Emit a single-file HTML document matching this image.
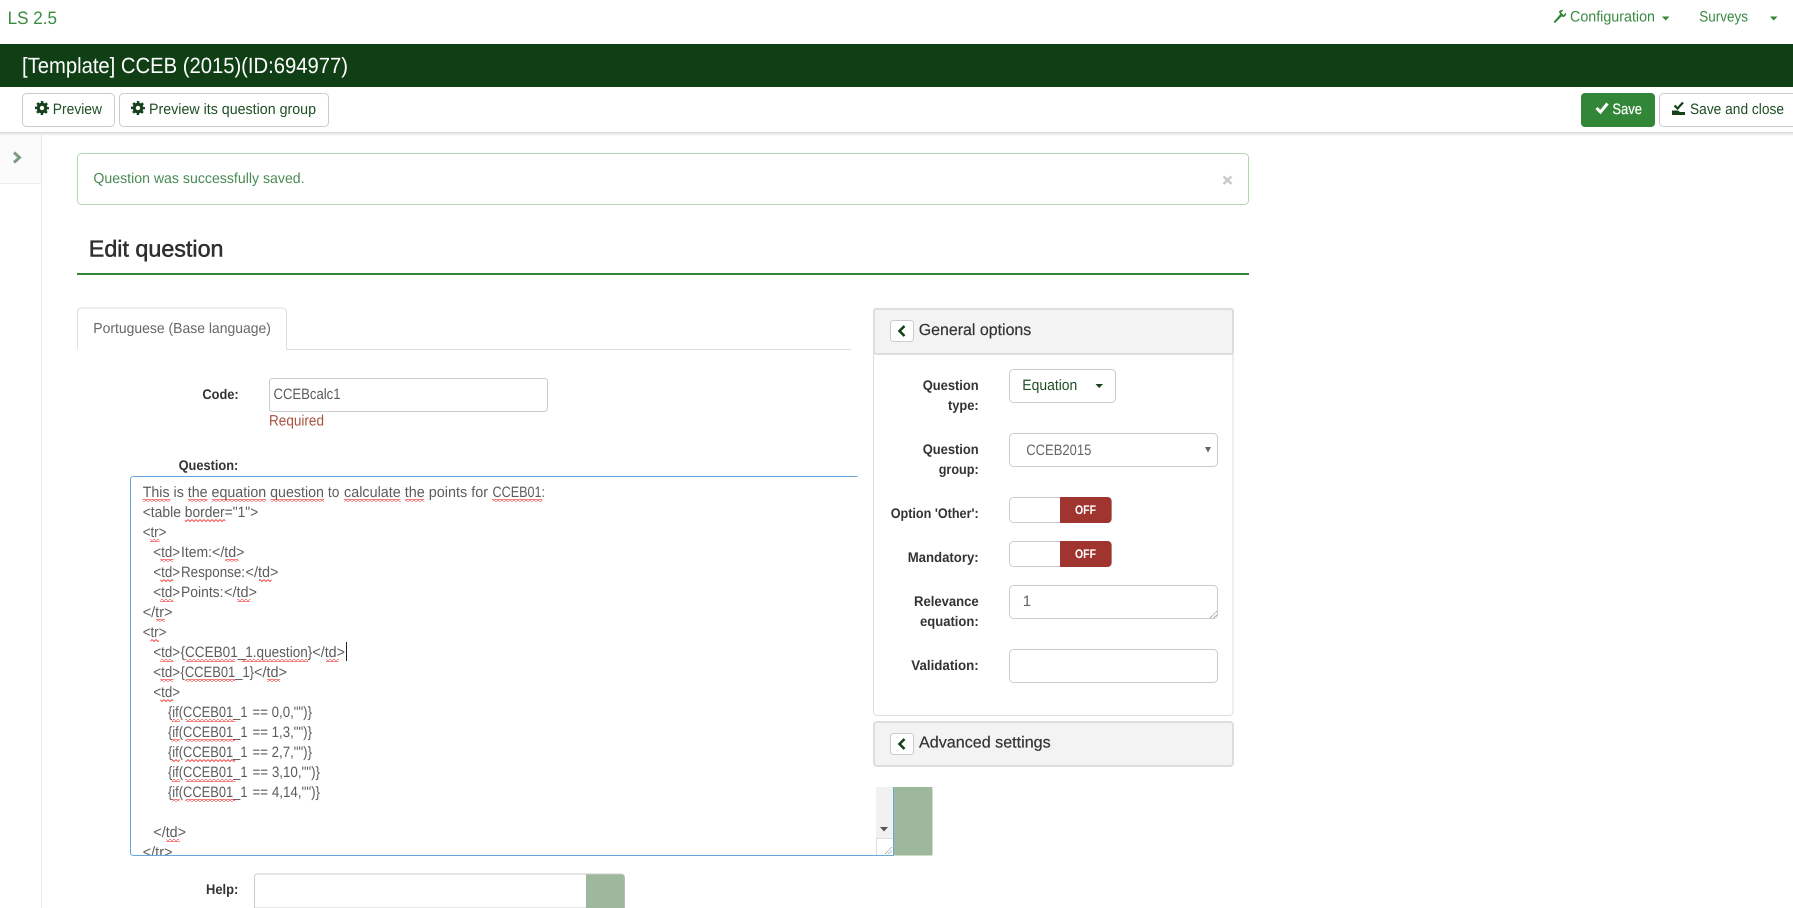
<!DOCTYPE html>
<html>
<head>
<meta charset="utf-8">
<title>Edit question</title>
<style>
html,body{margin:0;padding:0;background:#fff;width:1793px;height:908px;overflow:hidden}
svg{display:block}
text{font-family:"Liberation Sans",sans-serif;white-space:pre}
.g{fill:#3a8a42}
.bt{fill:#1f4f25;font-size:15px}
.l{fill:#333;font-size:14px;font-weight:bold}
.e{fill:#5c5c5c;font-size:15px}
.h{fill:#333;font-size:16px;stroke:#333;stroke-width:.2}
.w{fill:url(#wave)}
</style>
</head>
<body>
<svg width="1793" height="908" viewBox="0 0 1793 908" xmlns="http://www.w3.org/2000/svg" text-rendering="geometricPrecision">
<defs>
<pattern id="wave" width="4" height="3" patternUnits="userSpaceOnUse"><path d="M0 .5L2 2.5L4 .5" fill="none" stroke="#e22" stroke-width=".8"/></pattern>
<linearGradient id="sh" x1="0" y1="0" x2="0" y2="1"><stop offset="0" stop-color="#d8d8d8"/><stop offset="1" stop-color="#fff"/></linearGradient>
<g id="gear"><circle r="3.8" fill="none" stroke="#14401a" stroke-width="3.2"/><circle r="6" fill="none" stroke="#14401a" stroke-width="2" stroke-dasharray="2.4 2.31" stroke-dashoffset="1.2"/></g>
<g id="back"><rect x=".5" y=".5" width="23" height="21" rx="3" fill="#fff" stroke="#ccc"/><path d="M14.500 6L9.500 11L14.500 16" fill="none" stroke="#14401a" stroke-width="2.600"/></g>
<g id="grip"><path d="M0 7L7 0M3.500 7L7 3.500" stroke="#777" stroke-width=".8" stroke-dasharray="1 .7" fill="none"/></g>
</defs>

<!-- top nav -->
<text x="7.600" y="24" class="g" font-size="18" textLength="49.400" lengthAdjust="spacingAndGlyphs">LS 2.5</text>
<path d="M1553.500 22L1560 14.500L1559 11.500C1560 10 1562 9.500 1563.500 10L1561 12.500L1563.500 15L1566 12.500C1566.500 14.500 1565.500 16.500 1563.500 17L1561.500 16.500L1555 23Z" fill="#328637"/>
<text x="1570" y="21.500" class="g" font-size="15" textLength="85" lengthAdjust="spacingAndGlyphs">Configuration</text>
<path d="M1662 16.500H1669.500L1665.700 20.500Z" fill="#328637"/>
<text x="1699.300" y="21.500" class="g" font-size="15" textLength="48.700" lengthAdjust="spacingAndGlyphs">Surveys</text>
<path d="M1770 16.500H1777.500L1773.700 20.500Z" fill="#328637"/>

<!-- title bar -->
<rect x="0" y="44" width="1793" height="43" fill="#103f15"/>
<text x="22" y="73" fill="#fff" font-size="22" textLength="326" lengthAdjust="spacingAndGlyphs">[Template] CCEB (2015)(ID:694977)</text>

<!-- toolbar -->
<rect x="0" y="132" width="1793" height="4" fill="url(#sh)"/>
<rect x="22.500" y="93.500" width="92" height="33" rx="4" fill="#fff" stroke="#ccc"/>
<use href="#gear" x="42" y="108"/>
<text x="52.800" y="114" class="bt" textLength="49.200" lengthAdjust="spacingAndGlyphs">Preview</text>
<rect x="119.500" y="93.500" width="209" height="33" rx="4" fill="#fff" stroke="#ccc"/>
<use href="#gear" x="138" y="108"/>
<text x="149" y="114" class="bt" textLength="167" lengthAdjust="spacingAndGlyphs">Preview its question group</text>
<rect x="1581" y="93" width="74" height="34" rx="4" fill="#328637"/>
<path d="M1596.500 108L1600.500 112L1607.500 103.500" fill="none" stroke="#fff" stroke-width="3"/>
<text x="1612.400" y="114" fill="#fff" font-size="15" textLength="29.600" lengthAdjust="spacingAndGlyphs" stroke="#fff" stroke-width=".2">Save</text>
<rect x="1659.500" y="93.500" width="140" height="33" rx="4" fill="#fff" stroke="#ccc"/>
<path d="M1674.500 105.500L1677.500 108.500L1683 102.500" fill="none" stroke="#14401a" stroke-width="2.200"/>
<path d="M1672 110.500H1678L1680 112H1685V115H1672Z" fill="#14401a"/>
<text x="1690" y="114" class="bt" textLength="94" lengthAdjust="spacingAndGlyphs">Save and close</text>

<!-- sidebar -->
<rect x="0" y="136" width="41" height="47" fill="#fbfbfb"/>
<rect x="0" y="183" width="41" height="1" fill="#eee"/>
<rect x="41" y="132" width="1" height="776" fill="#e8e8e8"/>
<path d="M14 152.500L19.500 157.500L14 162.500" fill="none" stroke="#7f9a82" stroke-width="3"/>

<!-- alert -->
<rect x="77.500" y="153.500" width="1171" height="51" rx="4" fill="#fff" stroke="#b0d8b0"/>
<text x="93.400" y="183" fill="#4a8a54" font-size="14.500" textLength="211.200" lengthAdjust="spacingAndGlyphs">Question was successfully saved.</text>
<path d="M1223.500 176.500L1231.500 184M1231.500 176.500L1223.500 184" stroke="#c8c8c8" stroke-width="2.400" fill="none"/>

<!-- heading -->
<text x="88.800" y="256.500" fill="#2e2e2e" font-size="23" textLength="134.700" lengthAdjust="spacingAndGlyphs" stroke="#2e2e2e" stroke-width=".5">Edit question</text>
<rect x="77" y="273" width="1172" height="2" fill="#328637"/>

<!-- tabs -->
<path d="M77.500 349V312a4 4 0 0 1 4-4H282.500a4 4 0 0 1 4 4V349.500H851" fill="none" stroke="#ddd"/>
<text x="93.300" y="333" fill="#666" font-size="14.500" textLength="177.600" lengthAdjust="spacingAndGlyphs">Portuguese (Base language)</text>

<!-- code -->
<text x="202.400" y="399" class="l" textLength="36.300" lengthAdjust="spacingAndGlyphs">Code:</text>
<rect x="269.500" y="378.500" width="278" height="33" rx="3" fill="#fff" stroke="#ccc"/>
<text x="273.500" y="399" class="e" textLength="67" lengthAdjust="spacingAndGlyphs">CCEBcalc1</text>
<text x="269" y="425.500" fill="#a8503c" font-size="15" textLength="55" lengthAdjust="spacingAndGlyphs">Required</text>

<!-- question -->
<text x="178.600" y="470" class="l" textLength="59.700" lengthAdjust="spacingAndGlyphs">Question:</text>

<text x="142.700" y="497" class="e" textLength="181.300" lengthAdjust="spacingAndGlyphs">This is the equation question</text>
<text x="327.900" y="497" class="e" textLength="11.500" lengthAdjust="spacingAndGlyphs">to</text>
<text x="344" y="497" class="e" textLength="144" lengthAdjust="spacingAndGlyphs">calculate the points for</text>
<text x="492.500" y="497" class="e" textLength="52.500" lengthAdjust="spacingAndGlyphs">CCEB01:</text>

<text x="142.700" y="517" class="e" textLength="38.300" lengthAdjust="spacingAndGlyphs">&lt;table</text>
<text x="184.800" y="517" class="e" textLength="73.400" lengthAdjust="spacingAndGlyphs">border=&quot;1&quot;&gt;</text>

<text x="142.700" y="537" class="e" textLength="23.700" lengthAdjust="spacingAndGlyphs">&lt;tr&gt;</text>

<text x="153.400" y="557" class="e" textLength="26.600" lengthAdjust="spacingAndGlyphs">&lt;td&gt;</text>
<text x="181" y="557" class="e" textLength="31" lengthAdjust="spacingAndGlyphs">Item:</text>
<text x="212" y="557" class="e" textLength="32.500" lengthAdjust="spacingAndGlyphs">&lt;/td&gt;</text>

<text x="153.400" y="577" class="e" textLength="26.600" lengthAdjust="spacingAndGlyphs">&lt;td&gt;</text>
<text x="181" y="577" class="e" textLength="64" lengthAdjust="spacingAndGlyphs">Response:</text>
<text x="245.500" y="577" class="e" textLength="33" lengthAdjust="spacingAndGlyphs">&lt;/td&gt;</text>

<text x="153.400" y="597" class="e" textLength="26.600" lengthAdjust="spacingAndGlyphs">&lt;td&gt;</text>
<text x="181" y="597" class="e" textLength="42.500" lengthAdjust="spacingAndGlyphs">Points:</text>
<text x="224" y="597" class="e" textLength="33" lengthAdjust="spacingAndGlyphs">&lt;/td&gt;</text>

<text x="142.700" y="617" class="e" textLength="29.800" lengthAdjust="spacingAndGlyphs">&lt;/tr&gt;</text>
<text x="142.700" y="637" class="e" textLength="23.700" lengthAdjust="spacingAndGlyphs">&lt;tr&gt;</text>

<text x="153.400" y="657" class="e" textLength="26.600" lengthAdjust="spacingAndGlyphs">&lt;td&gt;</text>
<text x="180.500" y="657" class="e" textLength="131.800" lengthAdjust="spacingAndGlyphs">{CCEB01_1.question}</text>
<text x="312.400" y="657" class="e" textLength="32.600" lengthAdjust="spacingAndGlyphs">&lt;/td&gt;</text>
<rect x="346" y="642" width="1" height="19" fill="#222"/>

<text x="153.400" y="677" class="e" textLength="26.600" lengthAdjust="spacingAndGlyphs">&lt;td&gt;</text>
<text x="180.500" y="677" class="e" textLength="73.500" lengthAdjust="spacingAndGlyphs">{CCEB01_1}</text>
<text x="254" y="677" class="e" textLength="33" lengthAdjust="spacingAndGlyphs">&lt;/td&gt;</text>

<text x="153.400" y="697" class="e" textLength="26.600" lengthAdjust="spacingAndGlyphs">&lt;td&gt;</text>

<text x="168" y="717" class="e" textLength="79.500" lengthAdjust="spacingAndGlyphs">{if(CCEB01_1</text>
<text x="252.500" y="717" class="e" textLength="59.500" lengthAdjust="spacingAndGlyphs">== 0,0,&quot;&quot;)}</text>
<text x="168" y="737" class="e" textLength="79.500" lengthAdjust="spacingAndGlyphs">{if(CCEB01_1</text>
<text x="252.500" y="737" class="e" textLength="59.500" lengthAdjust="spacingAndGlyphs">== 1,3,&quot;&quot;)}</text>
<text x="168" y="757" class="e" textLength="79.500" lengthAdjust="spacingAndGlyphs">{if(CCEB01_1</text>
<text x="252.500" y="757" class="e" textLength="59.500" lengthAdjust="spacingAndGlyphs">== 2,7,&quot;&quot;)}</text>
<text x="168" y="777" class="e" textLength="79.500" lengthAdjust="spacingAndGlyphs">{if(CCEB01_1</text>
<text x="252.500" y="777" class="e" textLength="67.500" lengthAdjust="spacingAndGlyphs">== 3,10,&quot;&quot;)}</text>
<text x="168" y="797" class="e" textLength="79.500" lengthAdjust="spacingAndGlyphs">{if(CCEB01_1</text>
<text x="252.500" y="797" class="e" textLength="67.500" lengthAdjust="spacingAndGlyphs">== 4,14,&quot;&quot;)}</text>

<text x="153.400" y="837" class="e" textLength="32.600" lengthAdjust="spacingAndGlyphs">&lt;/td&gt;</text>
<text x="142.700" y="857" class="e" textLength="29.800" lengthAdjust="spacingAndGlyphs">&lt;/tr&gt;</text>

<!-- spellcheck squiggles -->
<g class="w">
<rect x="142.700" y="499" width="27.500" height="3"/><rect x="188.200" y="499" width="19.100" height="3"/><rect x="211.500" y="499" width="54.400" height="3"/><rect x="270.500" y="499" width="53.500" height="3"/><rect x="344" y="499" width="56.600" height="3"/><rect x="405.200" y="499" width="19.100" height="3"/><rect x="492.500" y="499" width="49.700" height="3"/>
<rect x="184.800" y="519" width="40.500" height="3"/>
<rect x="150" y="539" width="9.500" height="3"/>
<rect x="160.300" y="559" width="13" height="3"/><rect x="225.300" y="559" width="13" height="3"/>
<rect x="160.300" y="579" width="13" height="3"/><rect x="259" y="579" width="12.600" height="3"/>
<rect x="160.300" y="599" width="13" height="3"/><rect x="237.200" y="599" width="13" height="3"/>
<rect x="156.400" y="619" width="8.500" height="3"/>
<rect x="150.300" y="639" width="8.500" height="3"/>
<rect x="160.300" y="659" width="13" height="3"/><rect x="185.500" y="659" width="49.800" height="3"/><rect x="241.400" y="659" width="66.600" height="3"/><rect x="326" y="659" width="12.600" height="3"/>
<rect x="160.300" y="679" width="13" height="3"/><rect x="185.500" y="679" width="49.800" height="3"/><rect x="267" y="679" width="13" height="3"/>
<rect x="160.300" y="699" width="13" height="3"/>
<rect x="172" y="719" width="7.800" height="3"/><rect x="185.500" y="719" width="49.800" height="3"/>
<rect x="172" y="739" width="7.800" height="3"/><rect x="185.500" y="739" width="49.800" height="3"/>
<rect x="172" y="759" width="7.800" height="3"/><rect x="185.500" y="759" width="49.800" height="3"/>
<rect x="172" y="779" width="7.800" height="3"/><rect x="185.500" y="779" width="49.800" height="3"/>
<rect x="172" y="799" width="7.800" height="3"/><rect x="185.500" y="799" width="49.800" height="3"/>
<rect x="166.400" y="839" width="13" height="3"/>
</g>

<!-- editor frame -->
<rect x="131" y="856" width="780" height="12" fill="#fff"/>
<rect x="893.500" y="787" width="39" height="68.500" rx="1" fill="#9db89c"/>
<rect x="876" y="787" width="17" height="51" fill="#f1f1f1"/>
<path d="M880 827H888L884 831.500Z" fill="#555"/>
<rect x="876.500" y="838.500" width="17" height="17" fill="#fff" stroke="#ddd"/>
<use href="#grip" x="885" y="847"/>
<path d="M857.500 476.500H134a3 3 0 0 0-3.500 3.500V852a3 3 0 0 0 3.500 3.500H893.500V787" fill="none" stroke="#69a7da"/>

<!-- help -->
<text x="206" y="894" class="l" textLength="32.300" lengthAdjust="spacingAndGlyphs">Help:</text>
<path d="M254.500 908V877a3 3 0 0 1 3-3H621.500a3 3 0 0 1 3 3V908Z" fill="#fff" stroke="#ccc"/>
<path d="M586 874.500H621.500a3 3 0 0 1 3 3V908H586Z" fill="#9db89c"/>

<!-- general options panel -->
<rect x="873.500" y="308.500" width="359.500" height="407" rx="4" fill="#fff" stroke="#ddd"/>
<rect x="874" y="309" width="359" height="45" rx="2" fill="#f3f3f3" stroke="#ddd" stroke-width="2"/>
<use href="#back" x="890" y="320"/>
<text x="918.700" y="335" class="h" textLength="112.600" lengthAdjust="spacingAndGlyphs">General options</text>

<g class="l">
<text x="922.700" y="390" textLength="56" lengthAdjust="spacingAndGlyphs">Question</text>
<text x="948" y="410" textLength="30.700" lengthAdjust="spacingAndGlyphs">type:</text>
<text x="922.700" y="454" textLength="56" lengthAdjust="spacingAndGlyphs">Question</text>
<text x="938.700" y="474" textLength="40" lengthAdjust="spacingAndGlyphs">group:</text>
<text x="890.700" y="518" textLength="88" lengthAdjust="spacingAndGlyphs">Option 'Other':</text>
<text x="907.700" y="562" textLength="71" lengthAdjust="spacingAndGlyphs">Mandatory:</text>
<text x="914" y="606" textLength="64.700" lengthAdjust="spacingAndGlyphs">Relevance</text>
<text x="920" y="626" textLength="58.700" lengthAdjust="spacingAndGlyphs">equation:</text>
<text x="911.300" y="670" textLength="67.400" lengthAdjust="spacingAndGlyphs">Validation:</text>
</g>

<rect x="1009.500" y="369.500" width="106" height="33" rx="4" fill="#fff" stroke="#ccc"/>
<text x="1022.300" y="390" fill="#1f4f25" font-size="15" textLength="55" lengthAdjust="spacingAndGlyphs">Equation</text>
<path d="M1095.500 384H1103L1099.200 388Z" fill="#14401a"/>

<rect x="1009.500" y="433.500" width="208" height="33" rx="4" fill="#fff" stroke="#ccc"/>
<text x="1026.300" y="455" fill="#666" font-size="15" textLength="65" lengthAdjust="spacingAndGlyphs">CCEB2015</text>
<path d="M1205 447H1211L1208 452.500Z" fill="#666"/>

<rect x="1009.500" y="497.500" width="102" height="25" rx="4" fill="#fff" stroke="#ccc"/>
<path d="M1060 497H1107.500a4 4 0 0 1 4 4V519a4 4 0 0 1-4 4H1060Z" fill="#a03530"/>
<text x="1075" y="514" fill="#fff" font-size="12.500" font-weight="bold" textLength="21" lengthAdjust="spacingAndGlyphs">OFF</text>

<rect x="1009.500" y="541.500" width="102" height="25" rx="4" fill="#fff" stroke="#ccc"/>
<path d="M1060 541H1107.500a4 4 0 0 1 4 4V563a4 4 0 0 1-4 4H1060Z" fill="#a03530"/>
<text x="1075" y="558" fill="#fff" font-size="12.500" font-weight="bold" textLength="21" lengthAdjust="spacingAndGlyphs">OFF</text>

<rect x="1009.500" y="585.500" width="208" height="33" rx="4" fill="#fff" stroke="#ccc"/>
<text x="1022.700" y="606" fill="#666" font-size="15">1</text>
<use href="#grip" x="1210" y="611"/>

<rect x="1009.500" y="649.500" width="208" height="33" rx="4" fill="#fff" stroke="#ccc"/>

<!-- advanced settings panel -->
<rect x="874" y="722" width="359" height="44" rx="3" fill="#f3f3f3" stroke="#ddd" stroke-width="2"/>
<use href="#back" x="890" y="733"/>
<text x="919" y="747.500" class="h" textLength="131.700" lengthAdjust="spacingAndGlyphs">Advanced settings</text>
</svg>
</body>
</html>
